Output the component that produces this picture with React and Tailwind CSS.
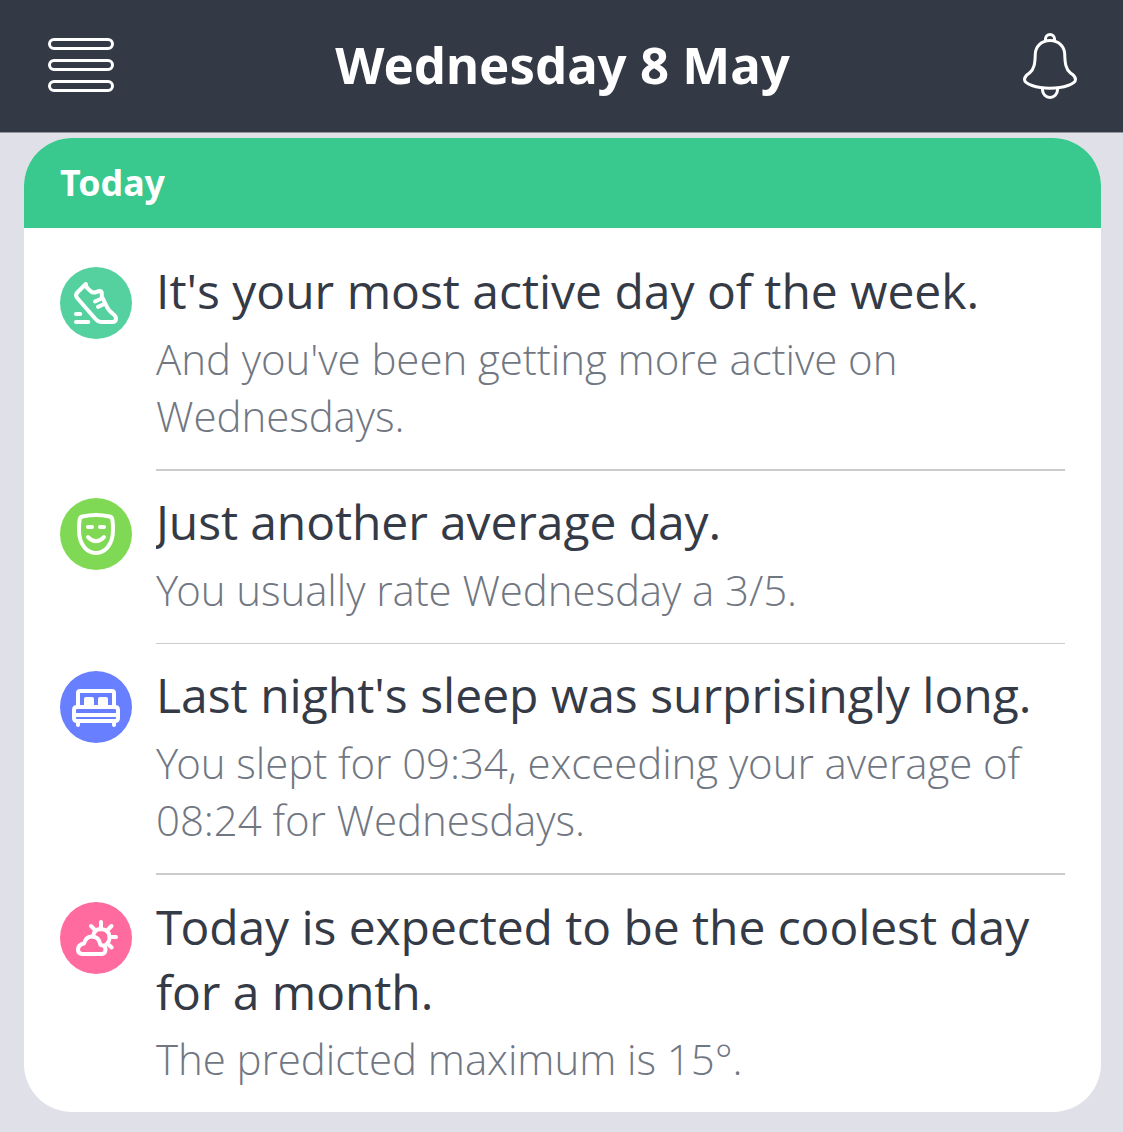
const iconProps = {
  viewBox: "0 0 72 72",
  className: "w-[72px] h-[72px]",
  fill: "none",
  stroke: "white",
  strokeWidth: 4,
  strokeLinecap: "round",
  strokeLinejoin: "round",
};

function ShoeIcon() {
  return (
    <svg {...iconProps}>
      <path d="M25.8 17L17.3 25.5Q14.8 28 17.2 31L35.5 52Q38 55 41.5 55H52Q56 55 56 51.5Q56 49 52 46Q48.5 43.500 46 38L41.800 29.500V26.500Q41.800 24 39.500 24L35 25.500Q32.500 26 30.500 24Q28 22 26.500 20Z" />
      <path d="M35 34.500L40 32.200M38 39.800L43.200 37.500M16 47H20.300M16 55H28.300" />
    </svg>
  );
}

function MaskIcon() {
  return (
    <svg {...iconProps}>
      <path d="M22.500 18.500Q36 15.500 49.500 18.500Q52 19 52.300 21.500Q53 25 53 32C53 46 45.500 55 36 55S19 46 19 32Q19 25 19.700 21.500Q20 19 22.500 18.500Z" />
      <path d="M28 29H32M40 29H44M28 39.200Q36 47.500 44 39.200" />
    </svg>
  );
}

function BedIcon() {
  return (
    <svg {...iconProps}>
      <path d="M18 36V22Q18 20 20 20H52Q54 20 54 22V36" />
      <path d="M14 39Q14 36 17 36H55Q58 36 58 39V47Q58 50 55 50H17Q14 50 14 47ZM16 44H56M18 50V54M54 50V54" />
      <path d="M24 35V28Q24 26 26 26H32Q34 26 34 28V35ZM38 35V28Q38 26 40 26H46Q48 26 48 28V35Z" fill="white" stroke="none" />
    </svg>
  );
}

function WeatherIcon() {
  return (
    <svg {...iconProps}>
      <path d="M22 52Q18 51.500 18 47.800Q18 42.500 24 41.500Q26 34.500 32 34.500Q39 34.500 40.500 43Q45.500 43 45.500 47.500Q45.500 52 41.500 52Z" />
      <path d="M33 34.500Q34 27 41 27Q49.500 27.500 49.500 35.500Q49.500 40 45.500 43" />
      <path d="M41 20V25M31 24L34 27M51.500 24L48.500 27M51.500 35H56M49 43L51.700 45.500" />
    </svg>
  );
}

function BellIcon() {
  return (
    <svg viewBox="0 0 56 68" className="w-14 h-[68px]" fill="none" stroke="white" strokeWidth="3">
      <path d="M28 8.500C19 8.500 13.500 15 13.300 22C13 31 12.500 37 7.500 41C4.500 43.300 2.500 44 2.500 47.500C2.500 52 14 56.200 28 56.200S53.500 52 53.500 47.500C53.500 44 51.500 43.300 48.500 41C43.500 37 43 31 42.700 22C42.500 15 37 8.500 28 8.500Z" />
      <path d="M23.500 9.500V7A4.500 4.500 0 0 1 32.500 7V9.500M20.500 56V58A7.500 7.500 0 0 0 35.500 58V56" />
    </svg>
  );
}

const items = [
  {
    icon: ShoeIcon,
    color: "bg-[#54d19f]",
    title: "It's your most active day of the week.",
    titleStyle: "mb-[7px] tracking-[-0.02px]",
    text: "And you've been getting more active on Wednesdays.",
    textStyle: "tracking-[-0.05px]",
    line: "pt-[18px] pb-[25px] border-b-2",
  },
  {
    icon: MaskIcon,
    color: "bg-[#80d954]",
    title: "Just another average day.",
    titleStyle: "mb-[7px] tracking-[-0.1px]",
    text: "You usually rate Wednesday a 3/5.",
    textStyle: "tracking-[-0.08px] first-letter:tracking-[-2px]",
    line: "pt-[18px] pb-[25px] border-b",
  },
  {
    icon: BedIcon,
    color: "bg-[#6880ff]",
    title: "Last night's sleep was surprisingly long.",
    titleStyle: "mb-[7px]",
    text: "You slept for 09:34, exceeding your average of 08:24 for Wednesdays.",
    textStyle: "tracking-[-0.07px] first-letter:tracking-[-2px]",
    line: "pt-[18px] pb-[25px] border-b-2",
  },
  {
    icon: WeatherIcon,
    color: "bg-[#ff6b9f]",
    title: "Today is expected to be the coolest day for a month.",
    titleStyle: "mb-1.5 tracking-[-0.08px] first-letter:tracking-[-2px]",
    text: "The predicted maximum is 15°.",
    textStyle: "tracking-[-0.06px]",
    line: "pt-[19px]",
  },
];

export default function App() {
  return (
    <div className="w-[1123px] h-[1132px] overflow-hidden bg-[#e0e0e9] font-['Open_Sans','Noto_Sans',sans-serif]">
      <header className="h-[133px] bg-[#333945] border-b border-[#92949c] flex items-center justify-between pl-12 pr-[45px]">
        <div className="w-[66px] flex flex-col gap-[9px] -mt-0.5">
          <div className="h-3 rounded-full border-3 border-white" />
          <div className="h-3 rounded-full border-3 border-white" />
          <div className="h-3 rounded-full border-3 border-white" />
        </div>
        <h1 className="-mt-0.5 mr-[11px] font-['Noto_Sans',sans-serif] text-white text-[50.900px] font-bold whitespace-nowrap">
          Wednesday 8 May
        </h1>
        <BellIcon />
      </header>

      <main className="mt-[5px] ml-6 w-[1077px] h-[974px] rounded-[48px] bg-white overflow-hidden">
        <h2 className="h-[90px] pl-9 flex items-center bg-[#39c88e] font-['Noto_Sans',sans-serif] text-white text-[35.800px] font-bold">
          Today
        </h2>
        <div className="px-9 pt-3">
          {items.map(({ icon: Icon, color, title, titleStyle, text, textStyle, line }) => (
            <div key={title} className="flex gap-6">
              <div className={`mt-[27px] w-[72px] h-[72px] shrink-0 rounded-full ${color}`}>
                <Icon />
              </div>
              <div className={`flex-1 border-[#cbcbcd] ${line}`}>
                <h3 className={`overflow-hidden text-[48px] leading-[65px] text-[#343a46] ${titleStyle}`}>{title}</h3>
                <p className={`text-[42px] leading-[57px] font-light text-[#717782] ${textStyle}`}>{text}</p>
              </div>
            </div>
          ))}
        </div>
      </main>
    </div>
  );
}
